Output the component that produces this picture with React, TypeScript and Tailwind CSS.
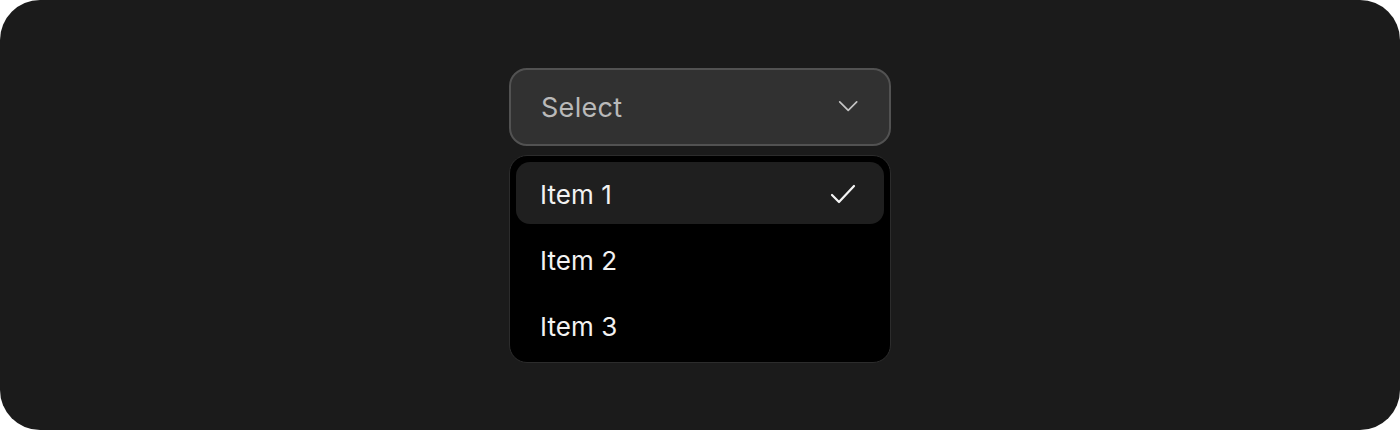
export default function App() {
  const items = ['Item 1', 'Item 2', 'Item 3'];
  return (
    <div className="w-[1400px] h-[430px] bg-white">
      <div
        className="w-full h-full rounded-[40px] bg-[#1b1b1b] flex justify-center pt-[68px]"
        style={{ fontFamily: 'Inter, "Liberation Sans", sans-serif' }}
      >
        <div className="w-[382px] flex flex-col gap-[9px]">
          <button className="h-[78px] w-full rounded-[18px] border-2 border-[#525252] bg-[#313131] flex items-center justify-between pl-[30px] pr-[29px]">
            <span className="text-[27px] text-[#b9b9b9] tracking-[0.3px] pt-[3px]">Select</span>
            <svg width="24" height="24" viewBox="0 0 24 24" fill="none" stroke="#c4c4c4" strokeWidth="2" strokeLinecap="round" strokeLinejoin="round">
              <path d="M2 7l10 10 10-10" transform="translate(2 1) scale(0.85)" />
            </svg>
          </button>
          <div className="w-full rounded-[18px] border-[1.5px] border-[#2c2c2c] bg-black p-[6px] flex flex-col gap-[4px]">
            {items.map((item, i) => (
              <div
                key={item}
                className={`h-[62px] rounded-[14px] flex items-center justify-between pl-[24px] pr-[26px] pt-[2px] ${
                  i === 0 ? 'bg-[#1f1f1f]' : ''
                }`}
              >
                <span className="text-[26px] text-[#f2f2f2] tracking-[0.1px]">{item}</span>
                {i === 0 && (
                  <svg width="28" height="28" viewBox="0 0 28 28" fill="none" stroke="#f5f5f5" strokeWidth="2.2" strokeLinecap="round" strokeLinejoin="round">
                    <path d="M2 15l7 7L24 6" />
                  </svg>
                )}
              </div>
            ))}
          </div>
        </div>
      </div>
    </div>
  );
}
